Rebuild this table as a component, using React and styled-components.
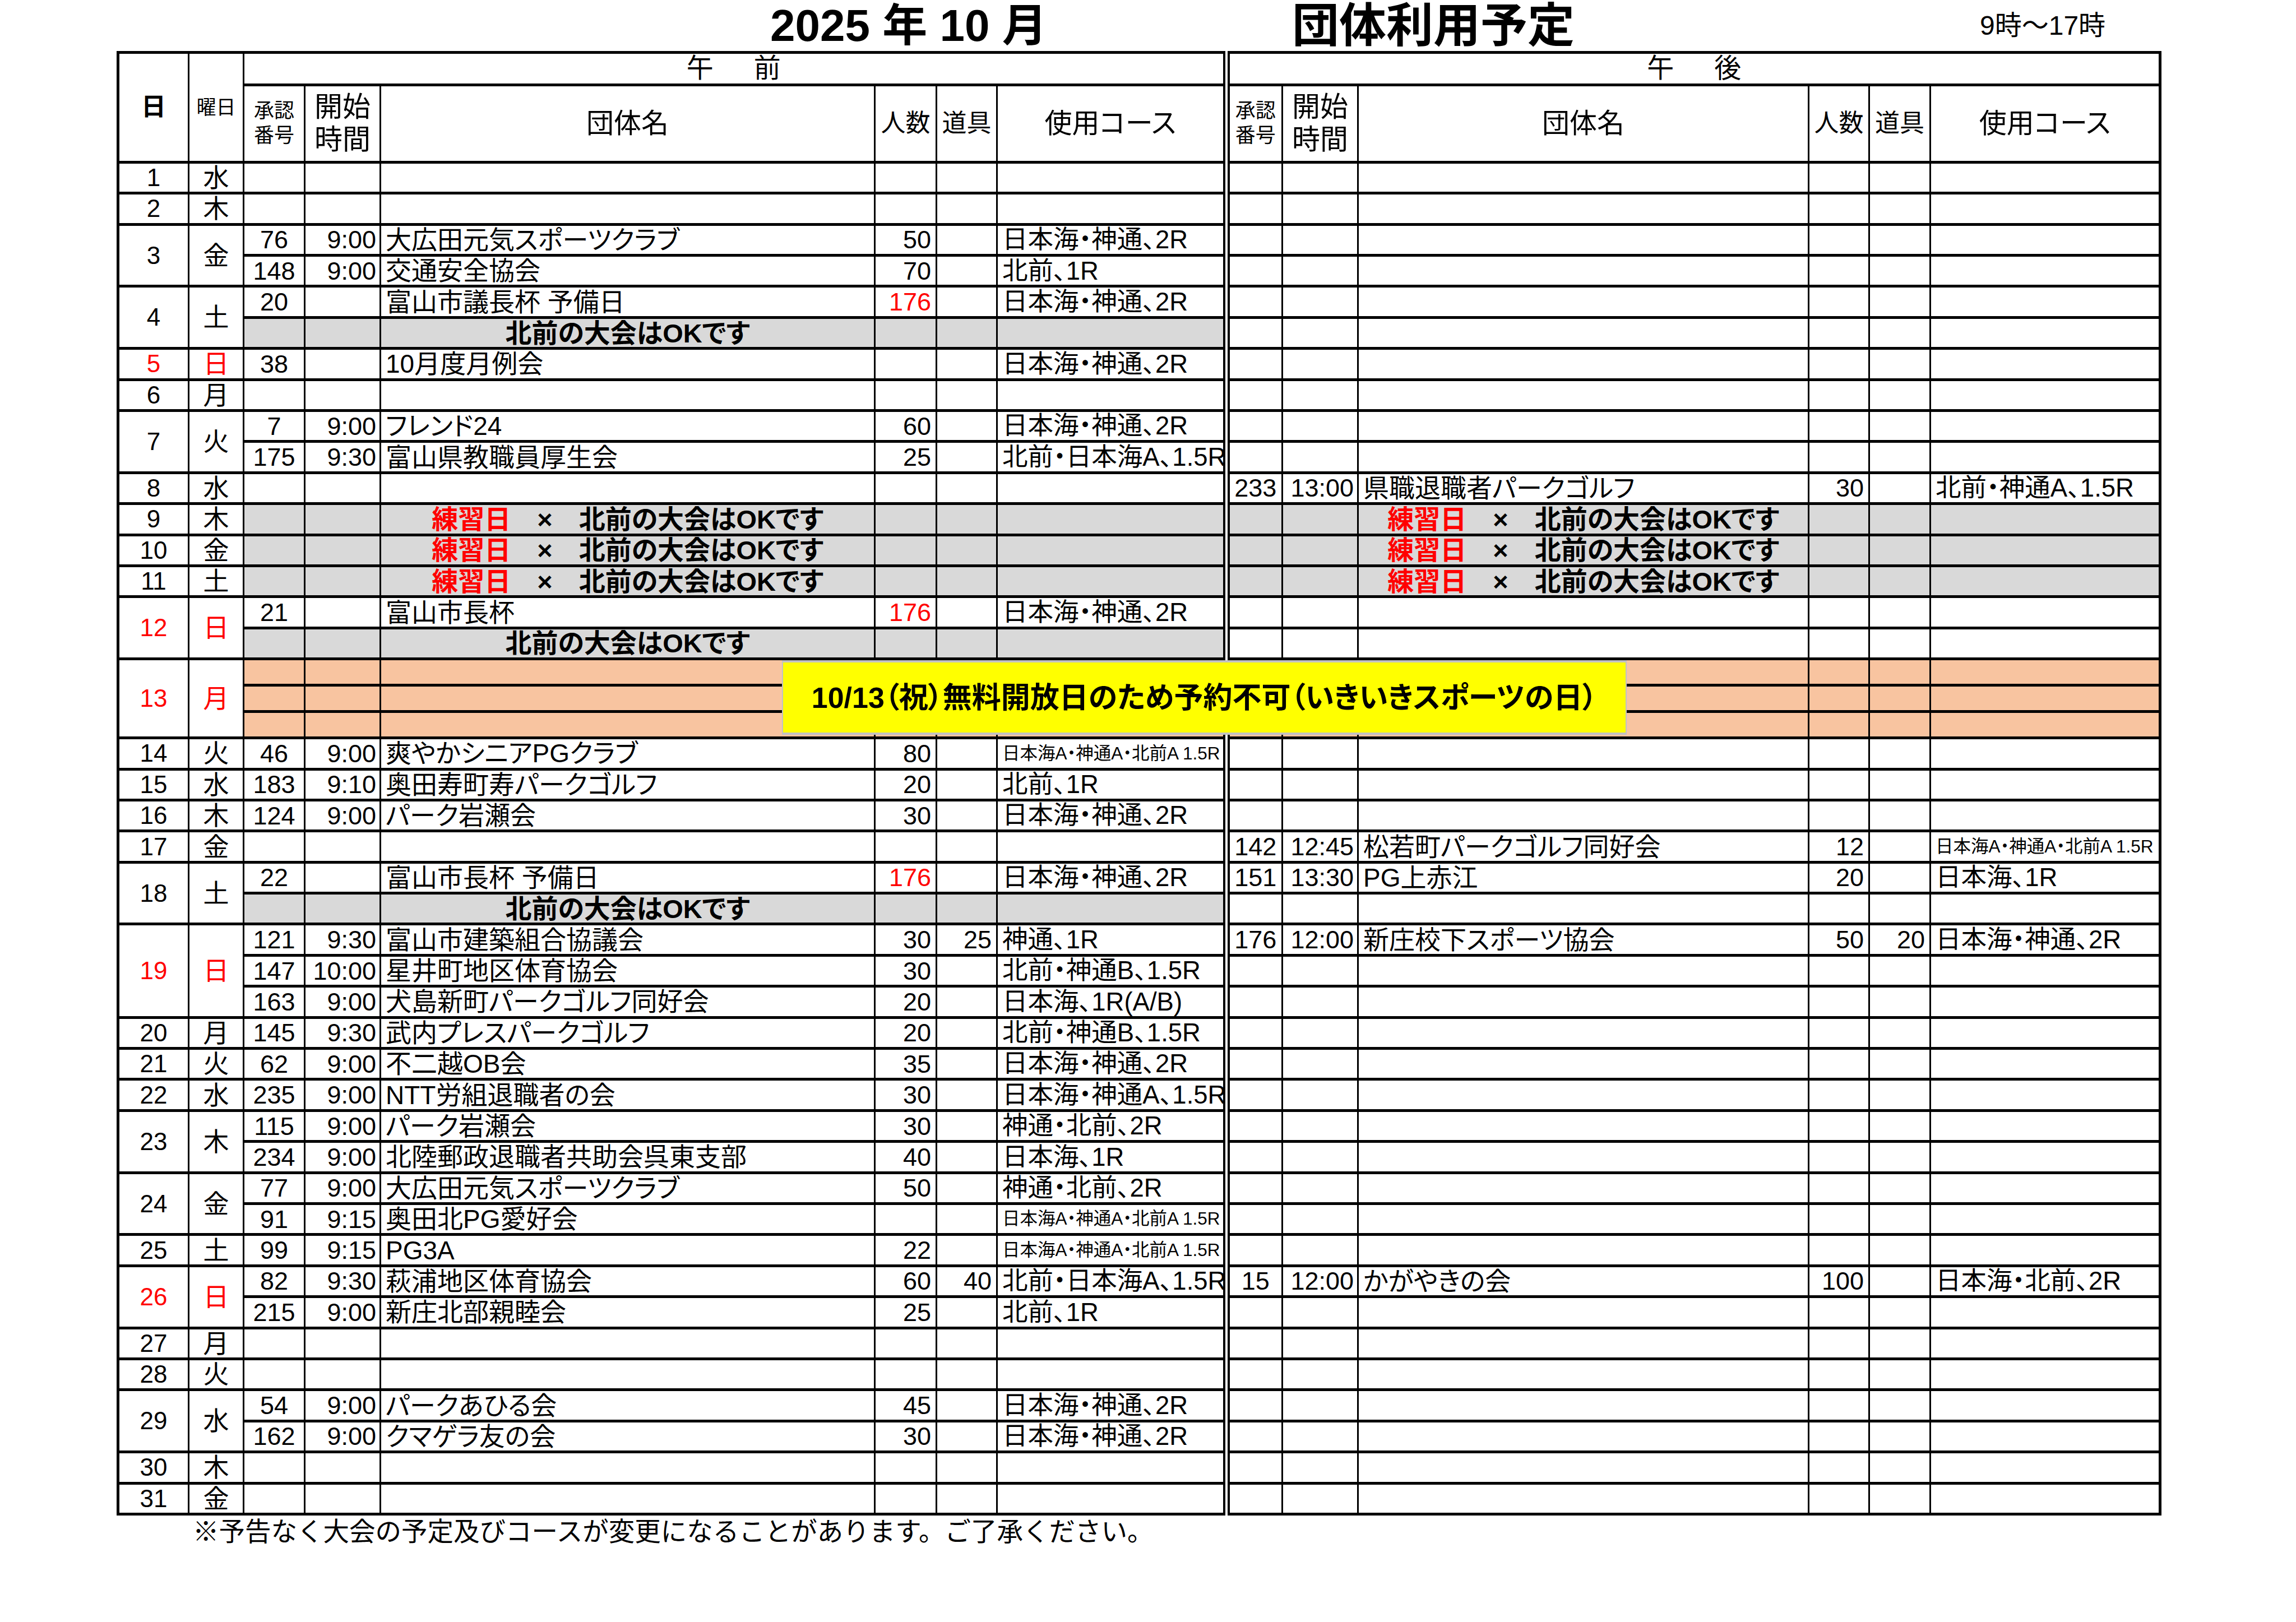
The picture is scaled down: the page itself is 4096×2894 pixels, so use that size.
import React from 'react'
import styled, { createGlobalStyle, css } from 'styled-components'

//Colours
const LINE = '#000'
const GRAY = '#d9d9d9'
const PEACH = '#f8c4a0'
const RED = '#ff0000'
const TONES = { gray: GRAY, peach: PEACH }

//Sizes (already at 0.583 of the print)
const COLS = [126, 98, 109, 135, 882, 110, 108, 409, 100, 135, 804, 108, 109, 410]
const ROW_H = 55.4
const HOLIDAY_ROW_H = 47
const SMALL_COURSE = '日本海A・神通A・北前A 1.5R'

//Styles
const GlobalStyle = createGlobalStyle`
    html, body {
        margin: 0;
        padding: 0;
        background: #fff;
    }
    body {
        font-family: "Liberation Sans", "Noto Sans CJK JP", sans-serif;
        color: #000;
    }
`
const Page = styled.div`
    width: 4096px;
    height: 2894px;
    padding-left: 208px;
    box-sizing: border-box;
    font-feature-settings: "palt";
    overflow: hidden;
`
const TitleBar = styled.header`
    display: flex;
    align-items: center;
    height: 91px;
    padding-left: 1166px;
`
const MonthTitle = styled.h1`
    width: 931px;
    margin: 0;
    font-size: 80px;
    font-weight: 700;
    line-height: 1;
`
const SheetTitle = styled.h2`
    width: 1227px;
    margin: 0;
    font-size: 84px;
    font-weight: 700;
    line-height: 1;
`
const Hours = styled.span`
    font-size: 48px;
    line-height: 1;
`
const Sheet = styled.table`
    border-collapse: collapse;
    table-layout: fixed;
    width: 3643px;
    border: 5px solid ${LINE};
`
const Col = styled.col`
    width: ${p => p.$w}px;
`
const Row = styled.tr`
    height: ${p => p.$h}px;
`
const cellLines = css`
    border: 3px solid ${LINE};
    border-top-width: 5px;
    border-bottom-width: 5px;
    vertical-align: middle;
    white-space: nowrap;
    line-height: 1;
`
const splitLine = css`
    border-right: 12px double ${LINE};
`
const HeadCell = styled.th`
    ${cellLines}
    padding: 0;
    font-size: ${p => p.$size}px;
    font-weight: ${p => p.$bold ? 700 : 400};
    line-height: ${p => p.$lh || 1};
    text-align: center;
    ${p => p.$split && splitLine}
`
const HalfDayHead = styled(HeadCell)`
    letter-spacing: 12px;
    padding-left: 12px;
`
const DayCell = styled.td`
    ${cellLines}
    position: relative;
    padding: 0;
    font-size: 44px;
    text-align: center;
    color: ${p => p.$red ? RED : '#000'};
`
const WeekdayCell = styled(DayCell)`
    font-size: 46px;
`
const DataCell = styled.td`
    ${cellLines}
    overflow: hidden;
    padding: 0 8px;
    font-size: 45px;
    color: ${p => p.$red ? RED : '#000'};
    background: ${p => TONES[p.$tone] || 'transparent'};
`
const NoCell = styled(DataCell)`
    padding: 0;
    text-align: center;
`
const TimeCell = styled(DataCell)`
    padding: 0 6px 0 0;
    text-align: right;
`
const NameCell = styled(DataCell)`
    text-align: ${p => p.$notice ? 'center' : 'left'};
    font-size: ${p => p.$notice ? 47 : 46}px;
    font-weight: ${p => p.$notice ? 700 : 400};
`
const CountCell = styled(DataCell)`
    text-align: right;
`
const CourseCell = styled(DataCell)`
    font-size: ${p => p.$small ? 31.5 : 45.5}px;
    ${p => p.$split && splitLine}
`
const PracticeMark = styled.span`
    color: ${RED};
`
const Banner = styled.div`
    position: absolute;
    top: 0;
    bottom: 3px;
    left: 1182px;
    width: 1507px;
    z-index: 2;
    display: flex;
    align-items: center;
    justify-content: center;
    box-sizing: border-box;
    background: #ffff00;
    border: 2px solid #c2c2c2;
    border-top-width: 4px;
    border-bottom-width: 4px;
    font-size: 52px;
    font-weight: 700;
    color: #000;
`
const Note = styled.p`
    margin: 0;
    padding-left: 136px;
    font-size: 46.5px;
    line-height: 58px;
    font-feature-settings: normal;
`

//Data
const e = (no, time, name, count, tools, course, countRed = false) => ({ no, time, name, count, tools, course, countRed })
const OK_NOTE = { tone: 'gray', notice: 'ok' }
const PRACTICE = { tone: 'gray', notice: 'practice' }
const HOLIDAY = { tone: 'peach' }

const days = [
    { d: 1, w: '水', rows: [{}] },
    { d: 2, w: '木', rows: [{}] },
    { d: 3, w: '金', rows: [
        { am: e('76', '9:00', '大広田元気スポーツクラブ', '50', '', '日本海・神通、2R') },
        { am: e('148', '9:00', '交通安全協会', '70', '', '北前、1R') },
    ] },
    { d: 4, w: '土', rows: [
        { am: e('20', '', '富山市議長杯 予備日', '176', '', '日本海・神通、2R', true) },
        { am: OK_NOTE },
    ] },
    { d: 5, w: '日', red: true, rows: [
        { am: e('38', '', '10月度月例会', '', '', '日本海・神通、2R') },
    ] },
    { d: 6, w: '月', rows: [{}] },
    { d: 7, w: '火', rows: [
        { am: e('7', '9:00', 'フレンド24', '60', '', '日本海・神通、2R') },
        { am: e('175', '9:30', '富山県教職員厚生会', '25', '', '北前・日本海A、1.5R') },
    ] },
    { d: 8, w: '水', rows: [
        { pm: e('233', '13:00', '県職退職者パークゴルフ', '30', '', '北前・神通A、1.5R') },
    ] },
    { d: 9, w: '木', rows: [{ am: PRACTICE, pm: PRACTICE }] },
    { d: 10, w: '金', rows: [{ am: PRACTICE, pm: PRACTICE }] },
    { d: 11, w: '土', rows: [{ am: PRACTICE, pm: PRACTICE }] },
    { d: 12, w: '日', red: true, rows: [
        { am: e('21', '', '富山市長杯', '176', '', '日本海・神通、2R', true) },
        { am: OK_NOTE },
    ] },
    { d: 13, w: '月', red: true, holiday: true, rows: [
        { am: HOLIDAY, pm: HOLIDAY },
        { am: HOLIDAY, pm: HOLIDAY },
        { am: HOLIDAY, pm: HOLIDAY },
    ] },
    { d: 14, w: '火', rows: [
        { am: e('46', '9:00', '爽やかシニアPGクラブ', '80', '', SMALL_COURSE) },
    ] },
    { d: 15, w: '水', rows: [
        { am: e('183', '9:10', '奥田寿町寿パークゴルフ', '20', '', '北前、1R') },
    ] },
    { d: 16, w: '木', rows: [
        { am: e('124', '9:00', 'パーク岩瀬会', '30', '', '日本海・神通、2R') },
    ] },
    { d: 17, w: '金', rows: [
        { pm: e('142', '12:45', '松若町パークゴルフ同好会', '12', '', SMALL_COURSE) },
    ] },
    { d: 18, w: '土', rows: [
        {
            am: e('22', '', '富山市長杯 予備日', '176', '', '日本海・神通、2R', true),
            pm: e('151', '13:30', 'PG上赤江', '20', '', '日本海、1R'),
        },
        { am: OK_NOTE },
    ] },
    { d: 19, w: '日', red: true, rows: [
        {
            am: e('121', '9:30', '富山市建築組合協議会', '30', '25', '神通、1R'),
            pm: e('176', '12:00', '新庄校下スポーツ協会', '50', '20', '日本海・神通、2R'),
        },
        { am: e('147', '10:00', '星井町地区体育協会', '30', '', '北前・神通B、1.5R') },
        { am: e('163', '9:00', '犬島新町パークゴルフ同好会', '20', '', '日本海、1R(A/B)') },
    ] },
    { d: 20, w: '月', rows: [{ am: e('145', '9:30', '武内プレスパークゴルフ', '20', '', '北前・神通B、1.5R') }] },
    { d: 21, w: '火', rows: [{ am: e('62', '9:00', '不二越OB会', '35', '', '日本海・神通、2R') }] },
    { d: 22, w: '水', rows: [{ am: e('235', '9:00', 'NTT労組退職者の会', '30', '', '日本海・神通A、1.5R') }] },
    { d: 23, w: '木', rows: [
        { am: e('115', '9:00', 'パーク岩瀬会', '30', '', '神通・北前、2R') },
        { am: e('234', '9:00', '北陸郵政退職者共助会呉東支部', '40', '', '日本海、1R') },
    ] },
    { d: 24, w: '金', rows: [
        { am: e('77', '9:00', '大広田元気スポーツクラブ', '50', '', '神通・北前、2R') },
        { am: e('91', '9:15', '奥田北PG愛好会', '', '', SMALL_COURSE) },
    ] },
    { d: 25, w: '土', rows: [{ am: e('99', '9:15', 'PG3A', '22', '', SMALL_COURSE) }] },
    { d: 26, w: '日', red: true, rows: [
        {
            am: e('82', '9:30', '萩浦地区体育協会', '60', '40', '北前・日本海A、1.5R'),
            pm: e('15', '12:00', 'かがやきの会', '100', '', '日本海・北前、2R'),
        },
        { am: e('215', '9:00', '新庄北部親睦会', '25', '', '北前、1R') },
    ] },
    { d: 27, w: '月', rows: [{}] },
    { d: 28, w: '火', rows: [{}] },
    { d: 29, w: '水', rows: [
        { am: e('54', '9:00', 'パークあひる会', '45', '', '日本海・神通、2R') },
        { am: e('162', '9:00', 'クマゲラ友の会', '30', '', '日本海・神通、2R') },
    ] },
    { d: 30, w: '木', rows: [{}] },
    { d: 31, w: '金', rows: [{}] },
]

//Parts
function Notice({ kind }) {
    if (kind === 'practice') {
        return <><PracticeMark>練習日</PracticeMark>　×　北前の大会はOKです</>
    }
    return <>北前の大会はOKです</>
}

function Half({ entry = {}, split }) {
    const tone = entry.tone
    return (
        <>
            <NoCell $tone={tone}>{entry.no}</NoCell>
            <TimeCell $tone={tone}>{entry.time}</TimeCell>
            <NameCell $tone={tone} $notice={!!entry.notice}>
                {entry.notice ? <Notice kind={entry.notice} /> : entry.name}
            </NameCell>
            <CountCell $tone={tone} $red={entry.countRed}>{entry.count}</CountCell>
            <CountCell $tone={tone}>{entry.tools}</CountCell>
            <CourseCell $tone={tone} $split={split} $small={entry.course === SMALL_COURSE}>
                {entry.course}
            </CourseCell>
        </>
    )
}

function DayRows({ day }) {
    const h = day.holiday ? HOLIDAY_ROW_H : ROW_H
    return day.rows.map((row, i) => (
        <Row key={i} $h={h}>
            {i === 0 && (
                <>
                    <DayCell rowSpan={day.rows.length} $red={day.red}>
                        {day.d}
                        {day.holiday && (
                            <Banner>10/13（祝）無料開放日のため予約不可（いきいきスポーツの日）</Banner>
                        )}
                    </DayCell>
                    <WeekdayCell rowSpan={day.rows.length} $red={day.red}>{day.w}</WeekdayCell>
                </>
            )}
            <Half entry={row.am} split />
            <Half entry={row.pm} />
        </Row>
    ))
}

function HalfHead({ split }) {
    return (
        <>
            <HeadCell $size={36} $lh={1.22}>承認<br />番号</HeadCell>
            <HeadCell $size={50} $lh={1.16}>開始<br />時間</HeadCell>
            <HeadCell $size={49}>団体名</HeadCell>
            <HeadCell $size={44}>人数</HeadCell>
            <HeadCell $size={44}>道具</HeadCell>
            <HeadCell $size={49} $split={split}>使用コース</HeadCell>
        </>
    )
}

//Main Component
function App() {
    return (
        <>
            <GlobalStyle />
            <Page>
                <TitleBar>
                    <MonthTitle>2025 年 10 月</MonthTitle>
                    <SheetTitle>団体利用予定</SheetTitle>
                    <Hours>9時～17時</Hours>
                </TitleBar>
                <Sheet>
                    <colgroup>
                        {COLS.map((w, i) => <Col key={i} $w={w} />)}
                    </colgroup>
                    <thead>
                        <Row $h={57.5}>
                            <HeadCell rowSpan={2} $size={44} $bold>日</HeadCell>
                            <HeadCell rowSpan={2} $size={35}>曜日</HeadCell>
                            <HalfDayHead colSpan={6} $size={48} $split>午　前</HalfDayHead>
                            <HalfDayHead colSpan={6} $size={48}>午　後</HalfDayHead>
                        </Row>
                        <Row $h={138.4}>
                            <HalfHead split />
                            <HalfHead />
                        </Row>
                    </thead>
                    <tbody>
                        {days.map(day => <DayRows key={day.d} day={day} />)}
                    </tbody>
                </Sheet>
                <Note>※予告なく大会の予定及びコースが変更になることがあります。ご了承ください。</Note>
            </Page>
        </>
    )
}

export default App
